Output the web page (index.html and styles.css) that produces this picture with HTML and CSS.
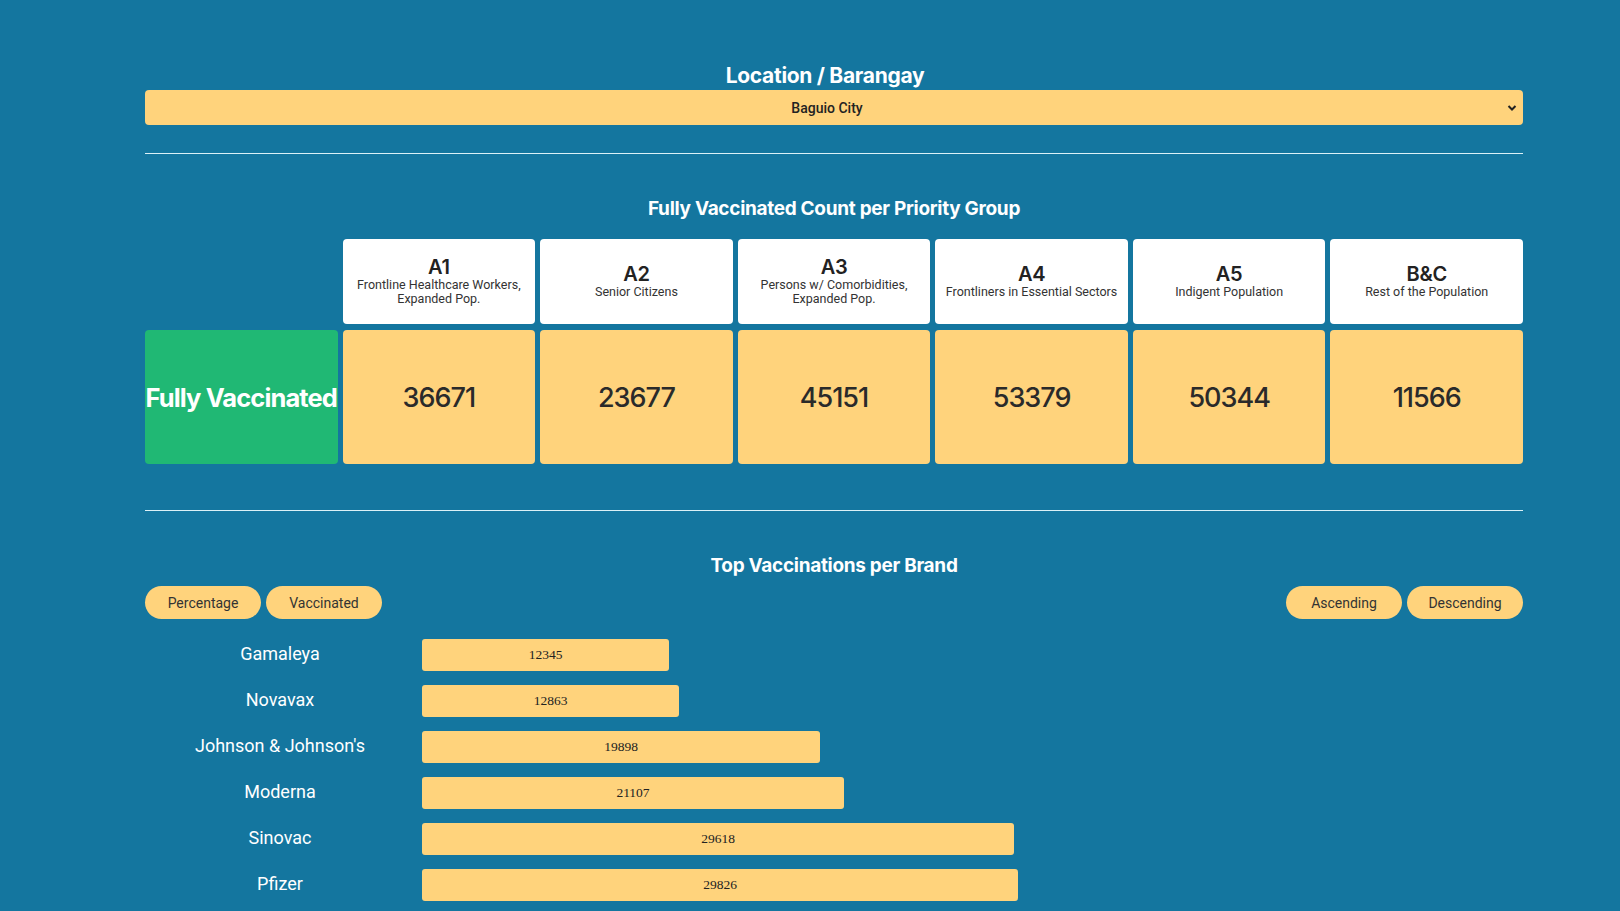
FILE: index.html
```html
<!DOCTYPE html>
<html lang="en">
<head>
<meta charset="utf-8">
<title>Vaccination Dashboard</title>
<link rel="stylesheet" href="styles.css">
</head>
<body>
<main class="page">
  <section class="location">
    <h1 class="title title-loc">Location / Barangay</h1>
    <div class="select-wrap">
      <select class="loc-select">
        <option>Baguio City</option>
      </select>
      <svg class="chevron" width="10" height="8" viewBox="0 0 10 8"><path d="M1.5 2 L5 5.5 L8.5 2" fill="none" stroke="#222" stroke-width="2"/></svg>
    </div>
  </section>
  <hr class="divider divider-1">
  <section class="priority">
    <h2 class="title">Fully Vaccinated Count per Priority Group</h2>
    <div class="grid">
      <div class="blank"></div>
      <div class="head"><div class="code">A1</div><div class="desc">Frontline Healthcare Workers,<br>Expanded Pop.</div></div>
      <div class="head"><div class="code">A2</div><div class="desc">Senior Citizens</div></div>
      <div class="head"><div class="code">A3</div><div class="desc">Persons w/ Comorbidities,<br>Expanded Pop.</div></div>
      <div class="head"><div class="code">A4</div><div class="desc">Frontliners in Essential Sectors</div></div>
      <div class="head"><div class="code">A5</div><div class="desc">Indigent Population</div></div>
      <div class="head"><div class="code">B&amp;C</div><div class="desc">Rest of the Population</div></div>
      <div class="rowlabel">Fully Vaccinated</div>
      <div class="val">36671</div>
      <div class="val">23677</div>
      <div class="val">45151</div>
      <div class="val">53379</div>
      <div class="val">50344</div>
      <div class="val">11566</div>
    </div>
  </section>
  <hr class="divider divider-2">
  <section class="brands">
    <h2 class="title">Top Vaccinations per Brand</h2>
    <div class="controls">
      <div class="btn-group">
        <button class="pill">Percentage</button>
        <button class="pill">Vaccinated</button>
      </div>
      <div class="btn-group">
        <button class="pill">Ascending</button>
        <button class="pill">Descending</button>
      </div>
    </div>
    <div class="bars">
      <div class="bar-row"><div class="brand">Gamaleya</div><div class="bar" style="width:247px">12345</div></div>
      <div class="bar-row"><div class="brand">Novavax</div><div class="bar" style="width:257px">12863</div></div>
      <div class="bar-row"><div class="brand">Johnson &amp; Johnson's</div><div class="bar" style="width:398px">19898</div></div>
      <div class="bar-row"><div class="brand">Moderna</div><div class="bar" style="width:422px">21107</div></div>
      <div class="bar-row"><div class="brand">Sinovac</div><div class="bar" style="width:592px">29618</div></div>
      <div class="bar-row"><div class="brand">Pfizer</div><div class="bar" style="width:596px">29826</div></div>
    </div>
  </section>
</main>
</body>
</html>
```
FILE: styles.css
```css
html, body {
  margin: 0;
  padding: 0;
  background: #14769f;
  overflow: hidden;
}
body {
  font-family: Roboto, "Liberation Sans", sans-serif;
  color: #fff;
}
.page {
  width: 1378px;
  margin-left: 145px;
  padding-top: 62px;
}
.title {
  margin: 0;
  font-family: Inter, "Open Sans", sans-serif;
  font-weight: 700;
  font-size: 19px;
  line-height: 22px;
  text-align: center;
  color: #fff;
  letter-spacing: -0.3px;
  padding-top: 1px;
  height: 22px;
}
.title-loc {
  font-size: 21px;
  line-height: 24px;
  height: 24px;
  padding-top: 2px;
  padding-right: 18px;
}
.select-wrap {
  position: relative;
  margin-top: 2px;
}
.loc-select {
  display: block;
  width: 100%;
  height: 35px;
  border: none;
  border-radius: 4px;
  background: #ffd37c;
  font-family: Roboto, sans-serif;
  font-weight: 500;
  font-size: 14px;
  color: #222;
  text-align: center;
  text-align-last: center;
  appearance: none;
  -webkit-appearance: none;
  padding: 0 14px 0 0;
}
.chevron {
  position: absolute;
  right: 6px;
  top: 14px;
}
.divider {
  border: none;
  height: 1px;
  background: #dcf1f7;
  margin: 28px 0 0;
}
.priority .title {
  margin-top: 43px;
}
.grid {
  display: grid;
  grid-template-columns: repeat(7, 1fr);
  grid-template-rows: 85px 134px;
  column-gap: 5px;
  row-gap: 6px;
  margin-top: 19px;
}
.head {
  background: #fff;
  border-radius: 4px;
  display: flex;
  flex-direction: column;
  align-items: center;
  justify-content: center;
  text-align: center;
  color: #222;
  padding-bottom: 1px;
}
.code {
  font-family: Inter, sans-serif;
  font-weight: 600;
  font-size: 20px;
  line-height: 22px;
  letter-spacing: -0.3px;
}
.desc {
  font-family: Roboto, sans-serif;
  font-size: 12.5px;
  line-height: 14px;
  color: #333;
}
.rowlabel {
  background: #20b874;
  border-radius: 4px;
  display: flex;
  align-items: center;
  justify-content: center;
  font-family: Inter, sans-serif;
  font-weight: 700;
  font-size: 25.5px;
  letter-spacing: -0.9px;
  color: #fff;
  white-space: nowrap;
}
.val {
  background: #ffd37c;
  border-radius: 4px;
  display: flex;
  align-items: center;
  justify-content: center;
  font-family: Inter, sans-serif;
  font-weight: 500;
  font-size: 27px;
  letter-spacing: -1px;
  color: #2a2a2a;
}
.divider-2 {
  margin-top: 46px;
}
.brands .title {
  margin-top: 43px;
}
.controls {
  display: flex;
  justify-content: space-between;
  margin-top: 9px;
}
.btn-group {
  display: flex;
  gap: 5px;
}
.pill {
  width: 116px;
  height: 33px;
  border: none;
  border-radius: 17px;
  background: #ffd37c;
  font-family: Roboto, sans-serif;
  font-size: 14px;
  color: #333;
  padding: 0;
}
.bars {
  display: flex;
  flex-direction: column;
  gap: 14px;
  margin-top: 20px;
}
.bar-row {
  display: flex;
  align-items: center;
  gap: 7px;
  height: 32px;
}
.brand {
  width: 270px;
  text-align: center;
  font-family: Roboto, sans-serif;
  font-size: 18px;
  line-height: 20px;
  padding-bottom: 2px;
  color: #fff;
}
.bar {
  height: 32px;
  background: #ffd37c;
  border-radius: 3px;
  display: flex;
  align-items: center;
  justify-content: center;
  font-family: "Liberation Serif", serif;
  font-size: 13.5px;
  padding-bottom: 1px;
  box-sizing: border-box;
  color: #222;
}
```
